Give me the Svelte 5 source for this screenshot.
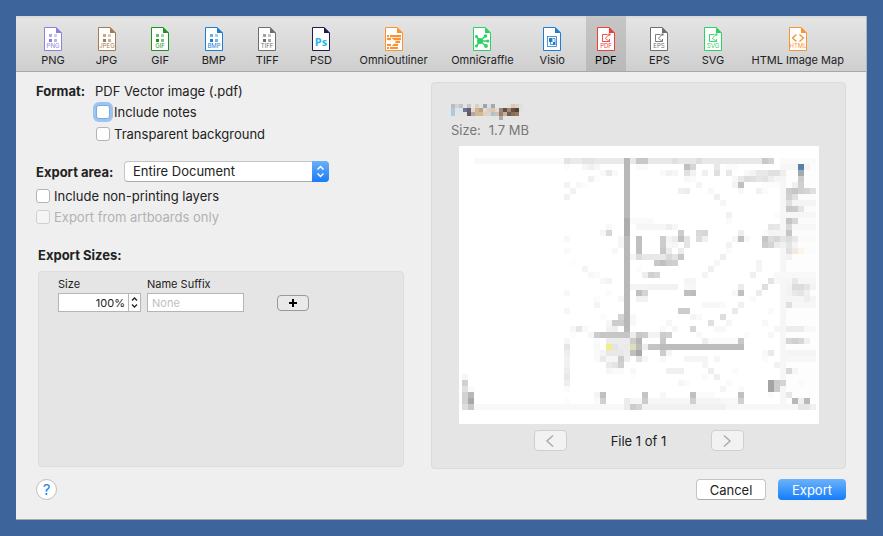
<script>
  const formats = [
    { name: 'PNG', tag: 'PNG', color: '#8b80df', art: 'dots' },
    { name: 'JPG', tag: 'JPEG', color: '#a47c50', art: 'dots' },
    { name: 'GIF', tag: 'GIF', color: '#1b971f', art: 'dots' },
    { name: 'BMP', tag: 'BMP', color: '#1c7fd6', art: 'dots' },
    { name: 'TIFF', tag: 'TIFF', color: '#6e6e6e', art: 'dots' },
    { name: 'PSD', tag: '', color: '#231a50', art: 'ps' },
    { name: 'OmniOutliner', tag: '', color: '#fb9331', art: 'outline' },
    { name: 'OmniGraffle', tag: '', color: '#2bd263', art: 'graph' },
    { name: 'Visio', tag: '', color: '#1c7fd6', art: 'visio' },
    { name: 'PDF', tag: 'PDF', color: '#f23c36', art: 'vector' },
    { name: 'EPS', tag: 'EPS', color: '#6e6e6e', art: 'vector' },
    { name: 'SVG', tag: 'SVG', color: '#2bd263', art: 'vector' },
    { name: 'HTML Image Map', tag: 'HTML', color: '#fb9331', art: 'code' }
  ];

  let selected = $state('PDF');
  let includeNotes = $state(false);
  let transparent = $state(false);
  let nonPrinting = $state(false);
  let area = $state('Entire Document');
  let percent = $state(100);
  let suffix = $state('');

  // Thumbnail tiles, one line per tile row: "row: column[xlength]=shade ..."
  const tileRows = `
26: 79x15=f9 94=e3 95x2=ea 97x2=e4 99x5=e9 104=b4 105=e8 106x2=c8 108x8=e8 112=e0 116=de 117x10=e8 127=c8 128=d2 130x6=fa
27: 94=fc 97=f6 98=f0 99=f6 106x2=f9 114=c0 115=d6 119=e8 121x2=fb 131x2=f6 133=5a7fab 134=f4
28: 100=f9 101=e9 102=f9 110=fa 111=f2 112=f6 114=e0 115=f2 117=f0 119=e0 121=e8 124=f8 125=f3 126x2=e8 128x2=e0 130=ee 133=9eacae
29: 98=f0 99=fc 114=f8 115=fb 122=f7 123=e8 124=dd 125=e0 126=e6 127=e3 128=ee 129=f5 133=cc
30: 94=f3 96=f8 97=fc 116=f5 122=f3 123=c0 127x3=fc 132=f0 133=d0
31: 95=f2 113=f0 114=ed 118=f8 123=f8 126=f2 127=fb 131=cc 132=c6 133=d0 134=d4 135=e0
32: 94=f2 119=f0 131=d0 132=e0 133x3=fb
33: 120=f6 131=e0 132x4=f4
34: 131=c8 132=cc 133=e4 134x2=fb
35: 121=f2 129=fb 131x5=f6
36: 105x4=fa 121=fa 131=c4 132=d6 133x3=fb
37: 101=f8 106x7=f6 111=ee 128=e6 129=e8 131=d8 132x4=f7
38: 100=f6 101=d6 113=cc 116=d9 117=d6 123=ee 127=fa 128x3=f4 131=c6 132x4=fc
39: 94=f8 103=f6 106=c0 110=cc 111=f4 112=ec 113=c0 114=e4 116=dc 117=f0 122=f6 123=c0 124=f8 127=c6 128=dc 129=d6 130=e4 131=dd 132=e8 133x3=fa
40: 103=f5 106=c0 110=cc 111=f8 112=f6 114=e4 121=f3 127=cc 128=d4 129=ec 130=f0 131=e4 132=f4
41: 94=fa 102=f8 106=c0 110=c8 111=ec 113=ec 121=fb 131=e0 132=f2ebe3 133=fdf4ea 134x2=fb
42: 105=f4 106=dc 107x4=e8 111=d8 112=e4 113=c8 120=f0 131=f2
43: 95=fd 109=c8 110=c0 111=cc 112=d0 119=f6 126=f4
44: 97=f4 106=fc 118=f0 126=f5
45: 98=f8 99=fb 107=ee 108=d0 109=d6 117=f4 125=f0 129x7=f8
46: 100=f7 101=f3 114x2=f5 128=e4 129=f7 131=f6 132=e8 133x3=f6
47: 105x3=f4 108x5=f2 114x2=f7 123=ec 127=de 131=f3 132x2=dc 134=e4 135=f4
48: 94=f8 101=fb 106=c0 107=d4 114=c0 115=bc 122=f8 123=c0 126=ec 131=f2 132=e8 133=e4 134=f0
49: 99=fc 103=f7 106x2=f2 125=fa 131x3=f5 134=ee 135=f5
50: 99=f5 117x3=f7 120=fa 123=f0 131=e0 132x4=f7
51: 94=f6 113x2=cc 122=ea 128=fa
52: 100=fc 103=d4 105=f8 115=f4 116=f9 120=de
53: 101=f6 102x2=cc 105=f8 111=f6 118=e0 121=f6 127=f8
54: 95=f7 96=e6 97=f8 101=f2 102=ee 110=fa 112=f7 115=d6 119x2=f8 129=f6 131x3=ec 134x2=f8
55: 95=fc 98=f6 99=cc 100x5=c6 105=ec 106=c8 107=cc 108x2=f3 110=cc 111=d0 116=f8 124=fb 128=f7
56: 94=f6 99=fa 101x4=ec 105=cc 106=b4 110=c8 117=ee 118x5=fa 123=c8 131=d6 132=d0 133=d6 134=f0
57: 94=e6 99=f8 101=f1ee88 102=e4 103x2=eb 105=dfddba 106=bc 107=ee 108x2=c4 110x14=bc
58: 94=ee 99=fa 100=f5 101x3=e8 104=ec 105=c0 106=a8 110=cc 111=f5 127=f8 128=ea 131x5=f4
59: 94=f2 99=fa 100=ea 101x2=f6 103=cc 104=ee 106=e2 107=f6 110=f8 114x4=f5 119=f6 127=fb 131x5=f7
60: 94=f0 101=ea 102=e4 103=d0 117=f6 129=f2
61: 94=ec 101=f6 102x2=fa 105=f8 111x3=f0 118=ee 122=fb 131=d8 132=f6
62: 77=f6 94=e8 105=fd 117=fa 119=f0
63: 77=d0 94=ee 113=f6 114=fb 121=fa 128=a4 129=cc 130=d4 133=fa
64: 77=e0 78=fa 94=fb 120=f5 123=fa 128=a4 129=cc
65: 77=d2 78=b8 99=f5 100=c0 107=c4 110=f8 115=c0 116x3=fa 123=c0 128=fb 131=e8
66: 77=d2 78=a8 94=fc 99=fa 100=d0 104=ec 105x2=f6 107=cc 108x7=f6 115=d0 116x4=f4 120x3=f8 123=d0 132=b8 133=ee 134=b8
67: 77=dd 78=c8 79x25=f8 104=ec 105=cc 106=d4 107x14=f1 121x12=f7 133x2=e6 135=f0`;

  const tiles = tileRows
    .trim()
    .split('\n')
    .flatMap((line) => {
      const [row, rest] = line.split(': ');
      return rest.split(' ').map((cell) => {
        const [pos, shade] = cell.split('=');
        const [col, len = '1'] = pos.split('x');
        return {
          x: Number(col) * 6 - 459,
          y: Number(row) * 6 + 2 - 146,
          w: Number(len) * 6,
          fill: '#' + (shade.length === 2 ? shade.repeat(3) : shade)
        };
      });
    });

  const nameTiles = [
    'bcbcbc d0d4d8 c2c5c8 e2e3e4 c4c6c7 e5e5e5 d8d1c6 e2e2e2 a0a5aa dddddd a0abb2 e5e5e5 e5e5e5 e5e5e5 e3e0dd d8c9bc dfd3c8 d9e1e3',
    'aac9da e1e4e5 dde4e7 6078a0 705c68 e0d8d2 d0b48c c0a084 e0dcd4 d8cfc2 dcc8a8 e0dad2 a08478 5c5048 a08870 6c5044 584034 dfe2e3',
    'a8cce0 e3e5e5 e0e4e4 e2e2e2 685860 b0a8a8 d0b890 d0b890 e0d0bc d8d4d0 b0c0cc d0c0b8 988070 c8b098 706050 887058 987860 e5e5e5',
    'e5e5e5 e5e5e5 e5e5e5 e5e5e5 e5e5e5 e5e5e5 e5e5e5 e5e5e5 e5e5e5 e5e5e5 e5e5e5 e5e5e5 b4a8a2 e5e5e5 e5e5e5 e5e5e5 e5e5e5 e5e5e5'
  ].map((r) => r.split(' '));
</script>

<div class="desktop">
  <div class="window">
    <div class="toolbar" role="toolbar" aria-label="Format">
      {#each formats as f}
        <button class="format" class:selected={selected === f.name} onclick={() => (selected = f.name)}>
          <svg width="18" height="24" viewBox="0 0 18 24" aria-hidden="true" style:color={f.color}>
            <path d="M.5.5H12L17.5 6V23.5H.5Z" fill="#fff" stroke="currentColor" />
            <path d="M12 0L18 6H12Z" fill="currentColor" />
            {#if f.art === 'dots'}
              <g fill="currentColor">
                <rect x="5" y="7" width="3" height="3" opacity=".65" />
                <rect x="10" y="7" width="3" height="3" opacity=".4" />
                <rect x="5" y="12" width="3" height="3" />
                <rect x="10" y="12" width="3" height="3" opacity=".6" />
              </g>
            {:else if f.art === 'ps'}
              <text x="9" y="19" class="ps">Ps</text>
            {:else if f.art === 'outline'}
              <path d="M2 8h2v2H2zM5 8h11v2H5zM2 10.700h14v2.300H2zM2 13.700h13v2.300H2zM2 16.700h11v2.300H2zM2 20h2v2H2zM5 20h8v2H5z" fill="currentColor" />
              <path d="M2 13.500H6V10.500L11 15L6 19.500V16.500H2Z" fill="#fff" />
            {:else if f.art === 'graph'}
              <path d="M7 14L3.500 9.500M7 14L3.500 19M7 14L12.500 9M7 14H15M7 14L13 19" stroke="currentColor" stroke-width="1.500" />
              <g fill="currentColor">
                <circle cx="7" cy="14" r="3" /><circle cx="3.500" cy="9.500" r="1.500" />
                <circle cx="3.500" cy="19" r="1.500" /><circle cx="12.500" cy="9" r="1.800" />
                <circle cx="14.800" cy="14" r="1.600" /><circle cx="13" cy="19" r="1.900" />
              </g>
            {:else if f.art === 'visio'}
              <g fill="none" stroke="currentColor">
                <rect x="4.500" y="9.500" width="9" height="10" stroke-width=".8" />
                <path d="M7.500 14V17.500H10M10 11.500H12V15" stroke-width=".8" />
              </g>
              <path d="M6 11h3.500v4H6zM10 15h2.500v3h-2.500z" fill="currentColor" />
            {:else if f.art === 'vector'}
              <path d="M10.500 7.500H5.500V14.500H12.500V12" fill="none" stroke="currentColor" stroke-width=".9" />
              <path d="M12.500 7.500Q9 9.500 8.500 11.500L12.500 14.500" fill="none" stroke="currentColor" stroke-width=".8" />
              <path d="M11.500 6.500h2v2h-2z" fill="currentColor" />
            {:else}
              <path d="M7.500 7.500L3.500 11L7.500 14.500M10.500 7.500L14.500 11L10.500 14.500" fill="none" stroke="currentColor" stroke-width="1.400" />
            {/if}
            {#if f.tag}
              <text x="9" y="21" class="tag">{f.tag}</text>
            {/if}
          </svg>
          <span>{f.name}</span>
        </button>
      {/each}
    </div>

    <div class="main">
      <section class="options">
        <div class="format-row"><b>Format:</b><span>PDF Vector image (.pdf)</span></div>
        <label class="check indent focus"><input type="checkbox" bind:checked={includeNotes} />Include notes</label>
        <label class="check indent"><input type="checkbox" bind:checked={transparent} />Transparent background</label>

        <div class="area-row">
          <label for="area">Export area:</label>
          <div class="popup">
            <select id="area" bind:value={area}>
              <option>Entire Document</option>
              <option>Current Canvas</option>
              <option>All Objects</option>
            </select>
            <svg width="17" height="21" viewBox="0 0 17 21" aria-hidden="true">
              <path d="M5.500 8.500L8.500 5.500L11.500 8.500M5.500 12.500L8.500 15.500L11.500 12.500" />
            </svg>
          </div>
        </div>
        <label class="check tight"><input type="checkbox" bind:checked={nonPrinting} />Include non-printing layers</label>
        <label class="check tight off"><input type="checkbox" disabled />Export from artboards only</label>

        <h2>Export Sizes:</h2>
        <div class="sizes">
          <div class="field size">
            <label for="size">Size</label>
            <div class="stepfield">
              <input id="size" type="text" value={percent + '%'} />
              <div class="stepper">
                <button aria-label="Increase size" onclick={() => (percent += 1)}>
                  <svg width="7" height="4" viewBox="0 0 7 4"><path d="M1 3.500L3.500 1L6 3.500" /></svg>
                </button>
                <button aria-label="Decrease size" onclick={() => (percent -= 1)}>
                  <svg width="7" height="4" viewBox="0 0 7 4"><path d="M1 .5L3.500 3L6 .5" /></svg>
                </button>
              </div>
            </div>
          </div>
          <div class="field suffix">
            <label for="suffix">Name Suffix</label>
            <input id="suffix" type="text" placeholder="None" bind:value={suffix} />
          </div>
          <button class="add" aria-label="Add size">
            <svg width="10" height="10" viewBox="0 0 10 10"><path d="M5 1V9M1 5H9" /></svg>
          </button>
        </div>
      </section>

      <section class="preview">
        <div class="info">
          <svg width="72" height="16" viewBox="0 0 72 16" shape-rendering="crispEdges" aria-hidden="true">
            {#each nameTiles as row, r}
              {#each row as c, i}
                <rect x={i * 4} y={r * 4} width="4" height="4" fill={'#' + c} />
              {/each}
            {/each}
          </svg>
          <p><span>Size:</span><span>1.7 MB</span></p>
        </div>
        <svg class="paper" viewBox="0 0 360 278" shape-rendering="crispEdges" aria-hidden="true">
          <rect x="321" y="12" width="6" height="252" fill="#f6f6f6" />
          <rect x="327" y="12" width="30" height="252" fill="#fdfdfd" />
          {#each tiles as t}
            <rect x={t.x} y={t.y} width={t.w} height="6" fill={t.fill} />
          {/each}
          <rect x="165" y="12" width="6" height="174" fill="#b8b8b8" />
          <rect x="165" y="72" width="6" height="18" fill="#adadad" />
        </svg>
        <div class="pager">
          <button disabled aria-label="Previous file">
            <svg width="12" height="14" viewBox="0 0 12 14"><path d="M9 1.500L3 7L9 12.500" /></svg>
          </button>
          <span>File 1 of 1</span>
          <button disabled aria-label="Next file">
            <svg width="12" height="14" viewBox="0 0 12 14"><path d="M3 1.500L9 7L3 12.500" /></svg>
          </button>
        </div>
      </section>
    </div>

    <footer>
      <button class="help" aria-label="Help">?</button>
      <div class="actions">
        <button class="push">Cancel</button>
        <button class="push primary">Export</button>
      </div>
    </footer>
  </div>
</div>

<style>
  .desktop {
    box-sizing: border-box;
    min-height: 100vh;
    padding: 16px;
    display: flex;
    background: #3e659b;
    color: #222;
    font: 13px/16px Inter, "Liberation Sans", sans-serif;
  }
  .desktop :is(button, input, select) {
    box-sizing: border-box;
    margin: 0;
    font: inherit;
    color: inherit;
  }
  .desktop svg { display: block; flex: none; }
  .window {
    flex: 1;
    min-width: 0;
    display: flex;
    flex-direction: column;
    background: #efefef;
    border-right: 1px solid #b5b5b5;
    border-bottom: 1px solid #aaa;
  }
  .toolbar {
    display: flex;
    justify-content: space-between;
    height: 55px;
    padding: 0 17px;
    border-bottom: 1px solid #a8a8a8;
    background: linear-gradient(#d8d8d8, #e4e4e4 3px, #cfcfcf);
  }
  .format {
    display: flex;
    flex-direction: column;
    align-items: center;
    gap: 2px;
    min-width: 40px;
    padding: 11px 5px 0;
    border: 0;
    background: none;
    white-space: nowrap;
  }
  .desktop .format { font-size: 11px; line-height: 14px; }
  .format.selected { background: linear-gradient(#c6c6c6, #b9b9b9); color: #000; }
  .tag { font: 6px Inter, sans-serif; fill: currentColor; text-anchor: middle; }
  .ps { font: bold 11px "Open Sans", sans-serif; fill: #25b4ea; text-anchor: middle; }

  .main {
    flex: 1;
    display: grid;
    grid-template-columns: minmax(0, 368fr) minmax(0, 415fr);
    gap: 27px;
    padding: 10px 20px 0;
  }
  .options { display: flex; flex-direction: column; }
  .format-row { display: flex; align-items: center; height: 18px; margin-bottom: 1px; }
  .format-row b { width: 59px; font-weight: 700; }
  .check { display: flex; align-items: center; gap: 4px; height: 22px; }
  .check.tight { height: 21px; }
  .indent { padding-left: 60px; }
  .check input {
    appearance: none;
    width: 14px;
    height: 14px;
    border: 1px solid #b4b4b4;
    border-radius: 3px;
    background: #fff;
  }
  .focus input { border-color: #7aaae0; box-shadow: 0 0 0 3px #9cc4f0; }
  .off { color: #b2b2b2; }
  .off input { border-color: #d0d0d0; background: #f5f5f5; }
  .area-row { display: flex; align-items: center; gap: 8px; margin: 16px 0 3px; }
  .area-row label { width: 80px; font-weight: 700; white-space: nowrap; }
  .popup { position: relative; width: 205px; }
  .popup select {
    appearance: none;
    display: block;
    width: 100%;
    height: 21px;
    padding: 0 20px 1px 8px;
    border: 1px solid #c4c4c4;
    border-bottom-color: #ababab;
    border-radius: 4px;
    background: #fff;
  }
  .popup svg {
    position: absolute;
    top: 0;
    right: 0;
    border-radius: 0 4px 4px 0;
    background: linear-gradient(#6bb0f8, #1a7bf9);
    pointer-events: none;
  }
  .popup path { fill: none; stroke: #fff; stroke-width: 1.500; }
  h2 { margin: 18px 2px 6px; font-size: 13px; line-height: 20px; }
  .sizes {
    flex: 1;
    display: flex;
    align-items: flex-start;
    margin: 0 0 2px 2px;
    padding: 5px 19px;
    border: 1px solid #dcdcdc;
    border-radius: 4px;
    background: #e5e5e5;
  }
  .field { display: flex; flex-direction: column; gap: 2px; font-size: 11px; line-height: 14px; }
  .size { width: 83px; margin-right: 6px; }
  .suffix { width: 97px; margin-right: 33px; }
  .field input {
    width: 100%;
    min-width: 0;
    height: 19px;
    padding: 0 4px;
    border: 1px solid #b5b5b5;
    border-radius: 0;
    background: #fff;
  }
  .field input::placeholder { color: #c0c0c0; opacity: 1; }
  .stepfield { display: flex; }
  .stepfield input { flex: 1; padding: 0 3px; text-align: right; }
  .stepper {
    display: flex;
    flex-direction: column;
    justify-content: center;
    gap: 3px;
    width: 11px;
    border: 1px solid #b5b5b5;
    border-left: 0;
    background: #fff;
  }
  .stepper button { padding: 0 2px; border: 0; background: none; }
  .stepper path { fill: none; stroke: #222; stroke-width: 1.300; }
  .add {
    display: grid;
    place-items: center;
    width: 32px;
    height: 16px;
    padding: 0;
    border: 1px solid #999;
    border-radius: 4px;
    background: #e9e9e9;
  }
  .desktop .sizes .add { margin-top: 18px; }
  .add path { stroke: #000; stroke-width: 2; }

  .preview {
    display: flex;
    flex-direction: column;
    border: 1px solid #dbdbdb;
    border-radius: 4px;
    background: #e5e5e5;
  }
  .info { padding: 21px 19px 0; color: #777; }
  .info p { display: flex; gap: 8px; margin: 2px 0 0; }
  .preview .paper { margin: 8px 26px 6px 27px; background: #fff; }
  .pager { display: flex; justify-content: center; align-items: center; }
  .pager span { width: 144px; text-align: center; }
  .pager button {
    display: grid;
    place-items: center;
    width: 33px;
    height: 21px;
    padding: 0;
    border: 1px solid #cfcfcf;
    border-radius: 4px;
    background: #f2f2f2;
  }
  .pager path { fill: none; stroke: #adadad; stroke-width: 1.600; }

  footer { display: flex; justify-content: space-between; padding: 10px 20px 19px; }
  footer button { height: 21px; padding: 0; }
  .actions { display: flex; gap: 12px; }
  .help {
    width: 21px;
    border: 1px solid #bdbdbd;
    border-radius: 50%;
    background: #fff;
  }
  footer .help { color: #1a7ff0; font-size: 15px; }
  .push {
    width: 70px;
    border: 1px solid #c4c4c4;
    border-bottom-color: #ababab;
    border-radius: 4px;
    background: #fff;
  }
  .primary { width: 68px; border: 0; background: linear-gradient(#6bb3fa, #157cfb); }
  .desktop footer .primary { color: #fff; }
</style>
